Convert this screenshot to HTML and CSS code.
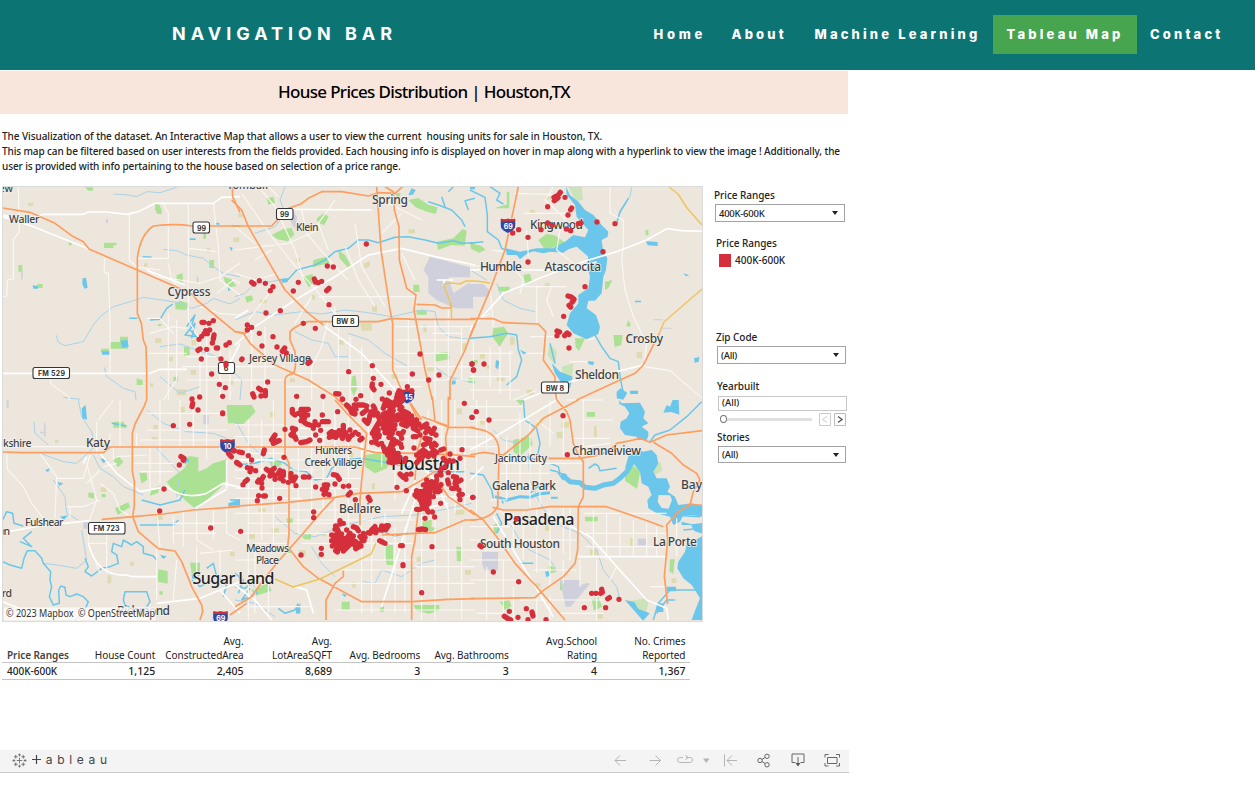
FILE: index.html
```html
<!DOCTYPE html>
<html lang="en">
<head>
<meta charset="utf-8">
<title>House Prices Distribution</title>
<link rel="stylesheet" href="styles.css">
</head>
<body>
<header class="topbar">
  <div class="brand">NAVIGATION BAR</div>
  <nav class="menu">
    <a class="link home">Home</a>
    <a class="link about">About</a>
    <a class="link ml">Machine Learning</a>
    <a class="link tab active">Tableau Map</a>
    <a class="link contact">Contact</a>
  </nav>
</header>
<main class="viz">
  <h1 class="banner"><span>House Prices Distribution | Houston,TX</span></h1>
  <div class="intro">
    <p class="l1">The Visualization of the dataset. An Interactive Map that allows a user to view the current&nbsp; housing units for sale in Houston, TX.</p>
    <p class="l2">This map can be filtered based on user interests from the fields provided. Each housing info is displayed on hover in map along with a hyperlink to view the image ! Additionally, the</p>
    <p class="l3">user is provided with info pertaining to the house based on selection of a price range.</p>
  </div>
  <div class="board">
    <svg class="map" viewBox="2 186 701 436">
      <rect class="land" x="2" y="186" width="701" height="436"/>
      <defs>
        <g id="i-shield">
          <path d="M-7 -7 Q-3.500 -5.500 0 -7 Q3.500 -5.500 7 -7 Q8.500 -2 7.500 2 Q5.500 6 0 8 Q-5.500 6 -7.500 2 Q-8.500 -2 -7 -7Z" fill="#35479c" stroke="#fff" stroke-width=".8"/>
          <path d="M-7 -7 Q-3.500 -5.500 0 -7 Q3.500 -5.500 7 -7 L7.600 -4 H-7.600Z" fill="#cf3030"/>
        </g>
      </defs>

      <!-- parks, fields and airports -->
      <g transform="translate(0 180) scale(.33333)">
        <path class="park" d="M255 22h24v10h-14zM465 72h12l8 18v12h-14l-6-14zM312 188h38v8h-10v8h-28zM205 188l10-2v10h-9zM55 255h12v20h-12zM112 312h16v12h-16zM628 240h14v24h-14zM530 285l18-5v28l-18-8zM330 486h30v-16h24v36h-54zM303 506h26v12h-26zM525 370l15-8 24 8-5 20-32-2zM670 290l25 8 14 20-20 4-14-16zM552 500h17v26h-17zM410 595l18 5v15h-18zM610 158h8v18h-8zM520 590h14v14h-14zM474 432h10v6h-10zM672 540l10 10-4 20-12-10z"/>
        <path class="field" d="M84 68h16v10h-16zM432 250h10v10h-10zM620 205h12v12h-12zM700 172h18v14h-18zM465 475h20v14h-20zM505 530h14v14h-14zM530 628h28v18h-28zM450 610h10v10h-10zM575 480h12v16h-12zM572 570h16v14h-16zM690 600h10v14h-10z"/>
        <path class="apt" d="M63 268h5v30h-5zM318 118h6v10h-6zM590 290h5v20h-5z"/>
      </g>
      <g transform="translate(235 180) scale(.33333)">
        <path class="park" d="M95 55l20-5 5 18-20 6zM110 165l35-18 25-3 8 20-20 20-30-6zM245 115l22-15 14 10-14 26-20-10zM520 60l30-6 30 20 28 8-6 20-30-8-30-12zM605 185l50-10 28-28 12 5-6 45-40-2-40 15zM310 210l20 15 18 32-10 5-25-28zM235 240l40-10 8 18-50 14zM205 290l28-8v30l-12 10zM30 350l20-4 5 14-20 8zM534 314h18l2 22h-18zM600 520l40-5 5 22-44 8zM350 590l12-4 4 40-10 22-8-20zM480 40h18l-8 20zM545 390h30v14h-30zM700 595h20v14h-20z"/>
        <path class="field" d="M10 100h14v12h-14zM385 252l20-10v16l-14 8zM182 235h14v10h-14zM520 148h20v12h-20zM412 375h14v20h-14zM230 345h10v14h-10zM75 360h20v10h-20zM375 428h35v24h-30zM565 435h10v22h-10zM470 580h18v16h-18zM575 560h22v14h-22zM165 595h15v12h-15zM680 490h14v24h-14zM310 480h16v14h-16z"/>
        <path class="apt" d="M585 230L705 262V292H640L655 340L700 310L714 314V385H660L605 360L580 340V290L565 270ZM170 90l16 20-6 38-14-24z"/>
        <path class="white" d="M605 300H655M628 300L625 318"/>
      </g>
      <g transform="translate(470 180) scale(.33333)">
        <path class="park2" d="M295 20h40l4 40-22 4zM240 490l20 25-4 40-24-30zM275 560l35-10-5 50-25-10z"/>
        <path class="park" d="M0 190l35 8 12 12-20 8-24-12zM205 180l24-18 25 4 34 24-14 8-50 10zM160 285l20-4 6 24-20 8zM85 320h34v14h-34zM405 305l22-5-12 25-10 5zM315 90l25 8 10 20-16 5zM315 475h30l-18 38-10-12zM430 465h28l-4 30-20 6zM70 445l32-5 12 20-25 40-22-30zM110 35h8v50h-45l38-12zM475 420l8 15-6 6-8-4zM527 150h8v16h-8zM5 540h18v10h-18z"/>
        <path class="field" d="M225 50h38v8h-38zM180 90h14v12h-14zM225 310h14v12h-14zM30 520h15v16h-15zM80 590h24v14h-24zM500 515h16v20h-16zM120 470h14v24h-14zM170 630h20v14h-20zM50 555h10v12h-10z"/>
        <path class="apt" d="M0 312h40l20 20-5 18h-55zM550 418h28v3h-28zM570 443h35v3h-35z"/>
      </g>
      <g transform="translate(0 400) scale(.33333)">
        <path class="park" d="M500 245L530 222L550 208L563 190L565 168L595 172V215L620 205L640 190L680 178V240L660 265L620 300L585 325L560 305L545 290L520 272ZM680 15H720V70H684ZM340 180l18-10 12 16-16 16zM418 218h22l2 22-18 10zM265 278h20l-4 18-16-4zM345 325l40-18 5 14-36 24zM475 508l28 5v38l-30-6zM570 488h30v40h-24zM450 272l30-15-6 22-24 8zM305 282h12v10h-12zM370 65l10 18h-40v-18zM478 574h10v10h-10z"/>
        <path class="field" d="M165 120h10v10h-10zM302 262h18v14h-18zM460 75h14v14h-14zM322 526h12v24h-12zM468 348h20v12h-20zM540 20h14v18h-14zM390 485h12v12h-12zM690 455h14v14h-14zM455 110h18v10h-18z"/>
        <path class="apt" d="M120 95h14v5h-14zM132 70h5v40h-5zM20 0h6v24h-6zM610 45h16v28h-16zM250 366h28v20h-28z"/>
      </g>
      <g transform="translate(235 400) scale(.33333)">
        <path class="park" d="M0 15H50L62 35L25 72H0ZM388 165L440 160L470 180L455 205L420 220L390 200ZM200 408l28-8v18h-20zM450 435h24v60h-18l-8-30zM560 365l30-6v20l-26 8zM535 615h78v16l-30 10-40-10zM50 570l50-20 10 22-50 16zM320 605h24v24h-24zM435 625l12-8v18h-12zM150 445h18v14h-18zM664 440h16v44h-14zM155 355h18v16h-18zM105 185l30-4 5 14-30 8zM575 378l30 6-20 14z"/>
        <path class="field" d="M250 460h18v14h-18zM70 325h22v10h-22zM110 385h22v16h-22zM192 450h20v20h-20zM352 545h10v18h-10zM545 470h16v16h-16zM660 330h28v14h-28zM40 400h20v18h-20zM410 250h10v18h-10zM105 35h14v16h-14zM665 25h16v18h-16zM260 395h14v14h-14zM690 510h18v14h-18zM340 160h16v12h-16z"/>
      </g>
      <g transform="translate(470 400) scale(.33333)">
        <path class="park" d="M465 215l18-24 28 22-10 54-36-25zM345 350h38v14h-38zM350 36h25v14h-25zM138 0h24l-10 16zM130 120l52-12 6 26-38 34-20-12zM235 498h12l14 16-22 8zM600 478h14l-4 44-12-8zM270 545h12v26h-12zM365 600l20-8 12 28-25 12zM90 605l28-4 6 18-20 10zM70 375l20-8-5 30-12 5z"/>
        <path class="park2" d="M545 210l25-25 8 26-24 14zM470 605l55-10 10 14-8 32-34-12z"/>
        <path class="field" d="M275 65h22v18h-22zM372 78h8v34h-8zM360 448h24v18h-24zM225 375h14v18h-14zM480 414h12v24h-12zM605 535h14v14h-14zM260 95h20v20h-20zM380 640h18v16h-18zM195 550h16v10h-16zM30 60h14v14h-14z"/>
        <path class="apt" d="M36 456h48v55h-40l-8-20zM270 540h60v16l24-8 5 5-58 68h-14zM503 416h28v20h-28z"/>
      </g>

      <!-- streams -->
      <g class="creek" transform="translate(0 180) scale(.33333)">
        <path d="M340 42L385 45L410 50L440 35L480 38L530 22M168 465L175 487L195 497L250 485L280 435L300 410L340 380L400 362L430 352L500 362L545 370L575 385L620 370L640 355L690 372L720 355M490 208L530 212L560 225L610 235L640 260L670 280L720 290M313 562L320 590L350 610L370 625L405 635L408 660M190 652L240 658M480 500L540 492L590 510L650 530L690 560M480 590L540 640L600 620"/>
      </g>
      <g class="creek" transform="translate(235 180) scale(.33333)">
        <path d="M0 350L30 340L60 310L110 305L150 295M150 20L135 60L150 100L120 140L60 160M0 420L60 395L120 405L200 395L260 402L330 390L400 398L470 410L560 390L600 395L610 440L640 470L720 480M180 455L230 480L280 490L300 530L340 530M340 460L400 480L450 520L520 560L600 560L640 590L720 610M0 580L20 600L15 660"/>
      </g>
      <g class="creek" transform="translate(470 180) scale(.33333)">
        <path d="M80 310L100 360L150 385L195 395M0 270L50 300M485 22L480 48L465 75L450 100L440 130"/>
      </g>
      <g class="creek" transform="translate(0 400) scale(.33333)">
        <path d="M235 0L245 50L275 95L285 140L230 190L190 185L120 160M102 65L105 100L145 135M280 165L300 205L340 230L370 260L430 285M130 490L170 495L230 505L260 480L245 390M440 30L490 70L560 95L640 100L680 115L700 130M470 145L540 220L530 290M160 240L195 290L200 340L235 360"/>
      </g>
      <g class="creek" transform="translate(235 400) scale(.33333)">
        <path d="M0 60L40 130L100 185L160 215M120 350L180 400L240 410L330 375L440 350L540 345L620 330L710 310M380 545L420 550L440 510L500 530L560 490L600 480M0 600L60 610L120 650M300 530L260 490L230 440"/>
      </g>
      <g class="creek" transform="translate(470 400) scale(.33333)">
        <path d="M175 160L180 240L210 310L250 370L330 400L380 450L400 510L440 560L450 600M70 90L100 120L150 130M120 370L160 440L240 480L260 510"/>
      </g>

      <!-- bayous, lakes and the bay -->
      <g transform="translate(0 180) scale(.33333)">
        <path class="water" d="M98 316l16 2v8h-14zM248 295l10-2 5 30-10 3-6-14zM362 482l20-2 4 20-20 4zM305 514h24v10h-22zM569 175h18v5h-18zM646 128h12v6h-12zM688 200l10 4-4 10zM684 322l8 8-8 3z"/>
        <path class="bayou" d="M428 230L455 232M450 420L480 418L500 385L518 372M388 415H412M560 440L585 405L570 450L590 470L555 465L585 430L575 475"/>
      </g>
      <g transform="translate(235 180) scale(.33333)">
        <path class="bayou" d="M135 300L160 298L185 270L240 255L270 240L300 215L340 205L370 180L400 180L430 188L480 172L520 170L570 180L610 190L655 182L680 190L720 188M690 140L680 120L650 90L610 75L580 65M620 50L630 80M655 20L640 35M720 55L690 62L700 90"/>
        <path class="water" d="M140 298l20-4-2 12-16 3zM650 598l12-2v16l-12 2zM520 45l10-20 12 5-8 14zM705 20h15v8h-15z"/>
      </g>
      <g transform="translate(470 180) scale(.33333)">
        <path class="bayou" d="M0 30L45 52L52 105L52 155L85 180L95 205L130 220M60 20L90 40L80 60L100 72M0 190L40 185M375 465L395 500L420 535L445 545L450 590L460 640M0 475L60 470L110 460L140 465L145 510L155 540L140 590L110 615M240 490L255 550M440 130L450 95L475 55"/>
        <path class="water" d="M288 20L300 45L325 65L345 90L370 105L395 135L415 155L413 170L395 180L400 215L412 235L408 270L400 290L395 340L375 362L355 362L350 385L378 405L390 440L385 462L350 478L310 460L290 435L300 400L325 370L325 345L355 325L360 290L350 250L355 230L320 200L295 208L280 218L240 215L220 220L190 214L170 222L150 238L140 225L110 225L108 205L150 215L200 205L250 205L285 185L310 165L345 172L355 150L320 110L315 75L290 45Z"/>
        <path class="water" d="M245 550L270 575L308 590L300 625L275 610L255 580ZM355 543l18 3-4 10-14-4zM528 184l35 2v12l-30-2zM672 535l16-4-2 14-12 3zM640 280l18 6-10 3zM495 362h18v5h-18zM440 635l12-10 20 14-12 20-20-4zM480 632h24v10h-24zM78 540l10 4-4 25-8-8zM150 510l20 8-10 5z"/>
      </g>
      <g transform="translate(0 400) scale(.33333)">
        <path class="bayou" d="M8 485L30 495L65 505L72 475L82 452L105 452L125 475L130 490L152 515L150 540L155 560L148 590L160 615L178 610L176 570L182 558L195 562L198 585L210 590L230 582L250 590L265 605L250 640L225 660M8 360L20 335L38 340L42 370L70 378M60 425L95 440L70 415L95 395M255 475L265 500L255 515L275 528L305 505L330 500L355 490L350 465L335 455L340 430L365 440L370 420L395 435L410 425L430 440L430 460L460 468L470 480M370 600L375 575L440 575L450 605L440 620M370 600L375 615L395 625M335 70L380 78M420 375H520L535 360M425 300L480 315L540 300L555 270M690 300L720 300M690 312L720 312M620 505L640 490L650 530L680 555L670 590M575 540L600 560L640 540"/>
        <path class="water" d="M245 25l12-10 4 44-14-4zM135 210l15-5-6 12zM172 246l18 4-12 8zM300 175l25 6-15 8zM685 310l35-12v16l-35 4zM180 350l24-4-12 14zM480 465l20 4-10 8zM575 525l22 5v10l-20-4zM560 170l8 12-14 12z"/>
      </g>
      <g transform="translate(235 400) scale(.33333)">
        <path class="bayou" d="M0 195L60 190L110 175L150 190L175 210L215 215L240 240L275 235L290 205L325 180L380 175L440 185L490 195L540 205L600 215L690 215M0 560L30 565L55 545L65 580L20 600L45 565M0 520L25 540L10 580M130 625L150 640L180 630L190 610M440 395L480 408L520 400"/>
        <path class="water" d="M0 305l15-5v12h-15zM182 625l14-15v30l-12 2zM320 580l16 5-8 6z"/>
      </g>
      <g transform="translate(470 400) scale(.33333)">
        <path class="bayou" d="M160 0L165 60L200 85L210 130L200 180L170 170M0 220L40 225L65 270L70 295M355 205L375 192L385 198L390 212L440 205M240 190L265 200L270 220L290 225M240 210L262 215L280 240M80 340L95 370L80 400M90 290L100 310M240 250L200 262L180 280M695 5L650 50L600 90L555 105L540 125M550 660L565 610L600 570L680 570M600 345L690 350M695 385L640 390M150 490L190 490M560 640L590 600L615 600"/>
        <path class="bay" d="M280 228L300 245L330 248L345 262L375 265L400 255L430 250L450 235L470 215L490 180"/>
        <path class="strait" d="M75 290L110 300L150 290L180 292L205 282L240 278"/>
        <path class="water" d="M448 0L455 10L510 8L525 35L520 55L535 70L515 80L535 95V108L530 120H505L500 110L465 105L450 85L452 65L470 55L478 40L465 20L448 12ZM478 160L495 145L520 155L545 150L560 165L565 190L550 215L560 235L590 235L600 260L592 275L615 290L625 315L665 310L697 318V350L665 345L640 345L630 365L610 375L600 350L560 340L535 325L532 300L545 285L535 260L515 250L510 215L490 190L465 205ZM697 408L650 435L645 455L625 485L622 505L640 535L665 555L675 570L690 595L672 640L665 660H697ZM590 15l10 5 8-20h18l2 44-24-8-24 2zM635 365l30 8 32-4v32l-24-8-10-18-28 0zM465 600l28 6 12 20 34 14-20 22-30-34zM590 560h28v14h-28zM560 610h20v26h-20zM225 515l10-2 6 14-12 4zM243 290h20v6h-20z"/>
        <path class="landfill" d="M566 285L600 286L606 300L596 326L575 324L563 305Z"/>
      </g>

      <!-- local streets -->
      <g class="street" transform="translate(0 180) scale(.33333)">
        <path d="M55 20L58 155L40 180V297L22 300L20 348L8 350M388 100V240L412 262M313 232V278L325 280L330 420V580M152 580V610L208 652V660M412 235H505V100L487 66M505 250L515 300L565 350M565 70V420L600 480V660M640 70L655 200L660 300L720 345M440 270L470 290L540 300L600 310L660 290L720 250M450 460L520 440L560 445M505 400V660M530 420V600L490 660M440 520H560M545 560H720M620 470V660M660 500V660M560 600H720M690 510V660M560 530H650M600 380L660 400L720 405M440 415H480L520 460M412 262L480 270M565 205L650 215M650 340L700 300L720 310"/>
      </g>
      <g class="street" transform="translate(235 180) scale(.33333)">
        <path d="M20 40L110 170L190 270L260 350L330 440M0 210L80 200L160 190L250 150M200 90L215 160L300 260L340 300M70 20L120 80L180 210L205 300M300 60L250 130L280 210M330 200L370 300L420 380M360 130L380 260L450 380M250 350H550M300 380V440M60 240L110 210M0 280L60 300L130 280M110 330L40 420M230 350L180 430M280 420L260 500L230 560V660M310 440V660M345 470V660M380 500V660M410 540V660M180 540H480M180 580H520M150 620H560M90 440V620M50 440V660M0 560H150M0 600H150M480 440H720M480 480H720M480 520H640M500 220L540 300M520 420V660M600 420V660M640 380V600M680 440V600M590 460H680M480 560H720M480 600H720M100 20L130 50M440 60L560 120M500 100L440 160M0 140L60 190"/>
      </g>
      <g class="street" transform="translate(470 180) scale(.33333)">
        <path d="M135 40L290 45M160 100H300M250 20L225 60L290 120M65 210L100 215M170 150L175 230M270 150L260 210L310 250M0 258H60M130 260L160 300L150 340M200 315V430M245 320L230 360L250 410M160 320H290M0 440L60 400M60 320L70 440M420 20V100L460 120V200L455 240L465 330L490 410L515 460L530 490L522 560L600 572L697 655M0 520H130M10 480V660M60 500V620M90 500V640M120 510V660M0 590H120M0 630H150M180 470H250M170 520H220M265 660V640M300 545H350M350 480L375 475M130 660L200 630"/>
      </g>
      <g class="street" transform="translate(0 400) scale(.33333)">
        <path d="M8 140H310M20 160L22 208L70 260L95 310L130 355M120 160L170 230L165 355M170 235H250L270 165M290 65V165M260 190L290 300L265 370V430L300 520M330 100V140M300 250L340 280L360 330L385 345M310 200L350 190M200 320H250L300 300M300 210L260 250M320 385V520M295 60L340 0M360 0V140M480 0V140M540 0V140M580 0V140M620 0V180M440 40H680M440 90H680M420 120H660M450 140V280M480 140V250M340 140V180M400 190H520M420 215H520M350 170L440 165M480 150V250M470 330L480 440M520 350V430M550 330V440M590 325V420L640 450M520 370H680M520 400H650M640 330V420M680 320V400L720 420M470 440V600M520 600L530 480M590 440V560M660 450V520M600 460L700 450M410 100V140M210 320V355M265 430H320"/>
      </g>
      <g class="street" transform="translate(235 400) scale(.33333)">
        <path d="M40 60V660M80 60V420M115 0V430M190 0V400M230 20V360M265 0V340M300 40V400M340 0V390M0 110H380M0 75H150M150 85H380M0 160H150M0 180H380M0 210H240M0 235H380M0 265H370M0 295H200M0 340H160M40 370H300M0 400H160M60 430H160M160 330H540M180 360H540M190 400H420M200 430H540M380 300V640M410 350V640M450 340V480M480 380V640M510 380V640M560 320V660M600 340V660M640 330V600M680 380V660M250 480H540M320 510H540M300 550H540M540 450H720M540 500H720M540 550H720M300 630H720M400 110H720M400 0V160M440 50V200M480 130V300M540 100V300M400 150H540M580 30V230M620 0V200M660 0V340M690 80V320M560 80H720M560 110H720M560 140H720M540 290H720M640 240L720 300M60 440V640M100 520V640M0 480H120M0 620H230"/>
      </g>
      <g class="street" transform="translate(470 400) scale(.33333)">
        <path d="M0 20H160M0 60H180M0 110H90M0 140H90M20 0V340M50 0V150M110 110V300M150 40V260M180 70V320M210 160V320M240 0V140M100 190H340M90 220H240M280 60V170M200 60L250 100M340 0V160M290 0H400M340 60H430M310 115H420M345 140L420 130M90 330L130 380M0 380H120M0 420H320M130 340V440M160 330V480M200 320V520M240 330V560M280 320V460M300 320V480M60 300H110M340 340H590M345 400H590M345 440H590M370 330V470M410 340V480M450 350V470M490 360V470M530 370V470M560 380V470M0 480H130M0 540H160M50 500V660M100 480V660M130 560V660M200 600V660M240 590V660M280 480V550M190 510H320M150 600H400M270 640H400M330 480V560M440 500L420 540M380 480V660M0 450H120M20 640H100M620 355V470M600 420H640M590 560H540"/>
      </g>
      <!-- arterials -->
      <g class="road" transform="translate(0 180) scale(.33333)">
        <path d="M8 110L100 140L267 207M8 106L100 118L130 103H250L265 96H320L380 103L415 95L465 70H640L665 52L720 50M8 580H450L480 568H560"/>
        <path d="M440 270L555 315M720 490L690 550"/>
      </g>
      <g class="road" transform="translate(235 180) scale(.33333)">
        <path d="M0 495L60 440L180 360L300 290L400 225L500 205L600 230L720 255M170 88L410 90M270 440L380 520L490 640M0 415L40 390"/>
      </g>
      <g class="road" transform="translate(470 180) scale(.33333)">
        <path d="M697 154L635 152L590 146L530 180L440 215L340 245L220 290L100 340L0 450M0 270H320L380 245M160 660L300 605L440 575L520 555M0 270L60 268"/>
      </g>
      <g class="road" transform="translate(0 400) scale(.33333)">
        <path d="M8 398L120 378L270 362M300 160L350 220L420 275L500 260Q550 300 620 280L670 250L720 262M265 430Q290 530 380 525L395 530H470M8 605L110 645M470 610L600 595L720 545M250 190L260 170M585 325L680 268M680 180V265M660 570L720 640"/>
      </g>
      <g class="road" transform="translate(235 400) scale(.33333)">
        <path d="M0 180H120M500 340L540 250L620 200M440 620L540 300M540 330L640 310M560 200L600 240L640 330M0 555L60 600L110 660M180 560L215 570L235 640M380 130V200"/>
      </g>
      <g class="road" transform="translate(470 400) scale(.33333)">
        <path d="M0 150L100 95L260 0M70 350L250 650M320 470H590M230 340L360 410L440 500L530 600L590 625L595 660M0 240L40 200"/>
      </g>

      <!-- highways -->
      <g class="hwy" transform="translate(0 180) scale(.33333)">
        <path d="M8 84L90 97L165 130L215 167L250 185L267 207L412 270L545 328L580 345L590 360L705 455L740 460M440 660V570L438 500L430 480L424 430L412 400V235Q420 165 460 138Q530 130 575 138H720M697 20L698 50L720 97"/>
      </g>
      <g class="hwy" transform="translate(235 180) scale(.33333)">
        <path d="M-10 138H110L160 85L198 72L220 55L260 35L320 35L400 48L430 38L480 40L503 20M-10 60L20 90L40 140L150 330L220 400L265 435M425 20L438 210L465 390L473 430V570L500 630L560 720M450 20L475 35L478 90L492 140L493 240L515 325L543 345L537 390L570 570L592 660M0 455L25 460L45 490L120 555L165 575L220 600L300 650L350 700M150 660L150 600Q150 585 175 580Q185 565 180 515L165 480V455Q185 435 220 425H430L470 415L540 418H720M545 373L600 375L620 384H648V370M720 430L690 510L645 602V660"/>
      </g>
      <g class="hwy" transform="translate(470 180) scale(.33333)">
        <path d="M145 20L105 210L60 330L0 470M0 416H70L100 428L205 432L227 455L220 540L255 590V625L260 660M320 660L450 600L495 580L520 555L567 462"/>
      </g>
      <g class="hwy" transform="translate(0 400) scale(.33333)">
        <path d="M440 0L432 20L405 72L397 100V215L403 245V315L398 350L415 395L475 446L525 453L545 485L575 560L605 615L608 635L600 660M8 156L70 158H310L330 141H720M305 358L400 350L490 342L580 330L720 320M690 645L740 610"/>
      </g>
      <g class="hwy" transform="translate(235 400) scale(.33333)">
        <path d="M-20 141H360L420 158L540 160L640 163L720 170M150 0V165L162 190V400L158 440L205 500L250 535L380 605H530L640 598L720 596M-20 320L150 308L300 292L370 280L500 275L560 240L620 200M300 292L260 335L200 405L135 478L85 540L50 590L0 620M300 0L340 45L395 100L380 240L375 300V375M440 405L540 400L600 398L690 360H720M273 660V600L300 550L325 530V512M550 330L540 420L530 470V660M525 10L550 60L560 110L545 160L540 240M592 -10L598 45L600 65M600 65L640 82H720M640 -10V80L632 110L635 180M560 50L640 78M600 230L640 290L720 345"/>
      </g>
      <g class="hwy" transform="translate(470 400) scale(.33333)">
        <path d="M0 82L45 92Q90 110 87 165L83 320Q60 360 0 360M0 330L40 360L80 410L135 490L200 560L285 660M0 165L40 157L100 165L175 105L220 55L325 0M260 0L290 35L300 60L310 130L325 165L340 185V290L325 320L323 450L315 490L280 530L215 575L195 593L0 596M235 175H330L390 165L420 150L440 130L490 120L510 115L540 127L590 105L697 92M550 127L605 160L640 195L680 220L690 240L670 275L660 315L625 335L590 375L593 420L583 530L593 612M68 322L100 330L170 330L240 320H410L540 365L580 380M650 315H697"/>
      </g>
      <g class="gold">
        <path d="M443.500 284L452 283L460 284L466 281H476L490 283M443.500 284L451.500 306V318M669 187L678 194L687 208L702 225M702 289L672 315L664 322L659 334M275 579L293 587L320 579L371 554L376 543M535 427L541 420"/>
      </g>

      <!-- route markers -->
      <g class="plate">
        <rect x="193" y="222" width="16.500" height="11" rx="2"/><rect x="276.500" y="208.500" width="16.500" height="11" rx="2"/>
        <rect x="332.500" y="315.500" width="26" height="11" rx="2"/><rect x="541.500" y="382" width="27" height="11" rx="2"/>
        <rect x="33" y="367.500" width="36.500" height="11" rx="2"/><rect x="88.500" y="522.500" width="36.500" height="11.500" rx="2"/>
        <rect x="218.500" y="362.500" width="16" height="11" rx="2"/>
      </g>
      <g class="plate-text">
        <text x="197" y="230.500" textLength="9">99</text><text x="280" y="217" textLength="9">99</text>
        <text x="336.500" y="324" textLength="18">BW 8</text><text x="546" y="390.500" textLength="18">BW 8</text>
        <text x="38" y="376" textLength="27">FM 529</text><text x="93.500" y="531.200" textLength="26">FM 723</text>
        <text x="223.800" y="370.800">6</text>
      </g>
      <use href="#i-shield" x="508" y="225.500"/><use href="#i-shield" x="227.500" y="446"/><use href="#i-shield" x="220.500" y="618"/><use href="#i-shield" x="407" y="396"/>
      <g class="shield-text">
        <text x="503.700" y="228.500">69</text><text x="223.700" y="449">10</text><text x="216.200" y="620.500">69</text><text x="403.500" y="399.500">45</text>
      </g>

      <!-- place names -->
      <g class="place">
        <text x="-4" y="192" textLength="17">iew</text><text x="9" y="223" textLength="30.500">Waller</text>
        <text x="227" y="189" textLength="41">Tomball</text><text x="296" y="231" textLength="22.500">Klein</text>
        <text x="249" y="362" textLength="62">Jersey Village</text><text x="-3" y="447" textLength="34.500">okshire</text>
        <text x="25" y="526" textLength="38.500">Fulshear</text><text x="-4" y="535" textLength="14">ton</text><text x="-4" y="597" textLength="16">ard</text>
        <text x="315" y="454" textLength="37">Hunters</text><text x="304.500" y="465.500" textLength="58">Creek Village</text>
        <text x="246" y="552" textLength="43">Meadows</text><text x="256" y="563.500" textLength="23">Place</text>
        <text x="495" y="462" textLength="52">Jacinto City</text>
      </g>
      <g class="place mid">
        <text x="372" y="204" textLength="36">Spring</text><text x="167.500" y="296" textLength="43">Cypress</text>
        <text x="480" y="271" textLength="42">Humble</text><text x="544.500" y="271" textLength="56.500">Atascocita</text>
        <text x="530" y="229" textLength="53">Kingwood</text><text x="625.500" y="343" textLength="37.500">Crosby</text>
        <text x="575" y="379" textLength="44">Sheldon</text><text x="86" y="447" textLength="24">Katy</text>
        <text x="339" y="513" textLength="42">Bellaire</text><text x="117" y="615" textLength="53">Richmond</text>
        <text x="492" y="490" textLength="64">Galena Park</text><text x="572" y="455" textLength="69">Channelview</text>
        <text x="681" y="488.500">Bay</text><text x="653" y="546" textLength="44">La Porte</text>
        <text x="480" y="548" textLength="80">South Houston</text>
      </g>
      <g class="place big">
        <text x="192.500" y="584" textLength="82">Sugar Land</text><text class="metro" x="391" y="470" textLength="69">Houston</text>
        <text x="503.500" y="525" textLength="71">Pasadena</text>
      </g>

      <!-- houses for sale -->
      <g class="dots" transform="translate(0 180) scale(.33333)">
        <path d="M606 427h6M627 430h0M640 422h0M617 452h0M629 450h0M622 461h-10M605 469h0M597 478h0M642 465l-2 12M637 489h0M600 507l-6 4M620 508h0M649 504h4M678 495h0M688 488h0M604 537h0M663 537h0M678 550v4M635 582h0M658 613h0M676 623h0M668 649h0M599 651h0M576 657h0"/>
      </g>
      <g class="dots" transform="translate(235 180) scale(.33333)">
        <path d="M394 192h0M277 258h0M295 261h0M190 307h0M175 333h0M50 307l7 5M73 302h0M91 310h0M114 320h0M106 332h0M238 297l3 9M250 308h0M260 304h0M282 325l-7 7M282 374h0M136 392h0M93 399h0M37 435h0M50 442h0M37 450h0M73 460h0M205 430h0M241 445h0M114 470h0M81 498h0M126 501h0M149 504l-7 10M154 519h0M21 537l-1 2M225 545l-6 5M98 606h0M71 625l7 5M91 632v15M53 641l4 10M78 648h0M185 649h0M264 649h0M302 641l10 1M322 657h0M341 575h0M412 557h0M415 595h0M412 612l-1 8l6 9M438 613h0M463 639h0M377 647h0M363 658h0M442 657h0M492 632l-5 13l13-4l-15 12l20 2M517 620h0M532 582h0M530 632h0M555 522h0M581 600h0M612 585h0M711 552h0M715 570h0"/>
      </g>
      <g class="dots" transform="translate(470 180) scale(.33333)">
        <path d="M271 37l-6 8l-13 7l6 4l-5 6l11-9M285 52h0M233 80h0M305 84l-3 5M294 105h0M233 129h0M246 136h0M213 149h0M146 149h0M128 159h0M174 172h0M289 147h0M302 152h0M325 131l8-2M381 126h0M435 131h0M399 215h0M174 246h0M345 320h0M294 348l10 3l8 7l-5 8M297 376l5 5M281 409h0M261 453l8 3M261 467h0M284 467l8-8l5 4M297 504h0M42 552h0M6 552h0M11 570h0"/>
      </g>
      <g class="dots" transform="translate(0 400) scale(.33333)">
        <path d="M578 10l-2 10M594 30h0M668 39v2M569 73h0M520 77h0M543 170l9 5l-2 6M538 195h0M492 267h0M479 333h0M632 384h0M686 161l8 9M701 153h0M711 188h0"/>
      </g>
      <g class="dots" transform="translate(235 400) scale(.33333)">
        <path d="M172 28v10l8 7M190 40h0M198 28h22M208 38l-8 10l8 7l-3 10l10 7l10 3M218 45h0M198 62h0M262 45h0M240 65h0M250 75h0M262 65h18M235 85h0M237 76h0M257 91h0M172 85l10 3M175 98l-7 7l12 5l3 8M150 88h0M197 128l18-3l10-5M242 105h0M254 121h0M120 105l-10 15l8 5l15-3l-18 8M88 150l-3 11M147 172h0M12 156l10 2M-2 152h0M5 187l10 8M40 167h0M50 180h0M37 203h0M48 205l-3 10M62 212h0M37 239l-7 6M24 254h0M72 240l-4 6l12-8l5-8M80 250h0M81 264h0M94 208l11 7l13-10M112 222l8 6M105 228h0M130 220l5-8M145 215v12l-10 8M120 238h0M145 243h0M160 247h0M168 220v13M182 231l-7 12M183 257h0M205 231h5M222 231h0M242 261h0M71 287h0M67 302h0M91 288h-5M134 295h0M268 255h10M262 268l10 4l-5 11M282 284h0M275 265h0M295 224l10 2l8 12M300 252h0M325 259h0M341 258h0M346 278l-6 7M361 299h0M400 292l5 9M236 336h0M236 353h0M17 394h0"/>
        <path d="M283 100l7-5l5 13l-12 4M300 98l2 14M312 92l-2 13M325 76v12M320 102l2 13M332 98l3 10M345 90h0M340 118l5-8M352 105h0M361 97h0M370 103h0M381 115l-6 5M308 35h0M323 -2h0M335 15l10 10l5 13l10 4M363 28l-5-13h27l10 3M382 40l13-10M388 60l10 10l4-10l3-15l5-10M415 18l5 10M418 45l10-5l4 14M445 25l5-15l10 8l-5-18l13 8l7 12l-10 10M480 5l10 10l10 7M488 -4l12 8M428 75l5-10l-18 30l15-5l-12 20l15-5l-15 20l12 8M412 100h0M410 127h0M440 130h0M432 110h0"/>
        <path class="mass" d="M445 42L475 32L442 52L482 48L448 62L488 60L440 72L480 75L445 85L478 88L450 98L472 100L462 112M490 45L512 42L495 57L530 48L508 62L545 60L525 72L552 72L535 85L548 92M500 72L515 78M495 28L520 40M475 118L468 135L480 130L452 155L475 150L458 165L490 160L465 175L495 172L470 188L490 185M445 140L450 155"/>
        <path d="M490 100h0M505 95l-8 10M500 115h0M485 125l12 8M500 142h0M535 110h8M555 105h0M560 82l15-10M575 85h5M572 98l8-8M590 100l8-15M603 105h0M570 115l15 3M537 144h0M565 135l18-8M555 158l10-8l12 10l-15 10l-10 10l-7 8M560 175h0M545 165h0M580 170l10-12M598 130l5 5M595 150l10 8M618 150l8-3M597 168h0M590 140h0M645 162h0M681 149h0M675 175h0M625 175l10 12l8-5M655 183h0M630 200h0M620 205l-5 12M640 218h0M462 186h0M508 185h0M512 175h0M495 222l10 10l10-8M528 222h0M513 238h0M486 262h0M514 272h0M688 10h0M711 52h0"/>
        <path class="mass" d="M545 290L560 280L575 265L600 262L565 255L585 250L575 285L555 300L585 275L545 275M555 290L585 285L570 305M560 310L565 325L575 318M600 255L605 240"/>
        <path d="M540 285h0M545 272h0M575 240h0M590 245h0M605 228h0M618 225h0M610 262l8-8M615 272h0M600 275h10M595 290h0M582 300v10M545 328h10M575 328l5 8M592 336h0M617 310h0M570 355h0M599 351h0M550 389l12-2l10 2M638 240l3 12M655 230l10 2l-5 18l18-10M668 245h0M650 265l8 0M665 260h0M672 270h0M672 285l10-2M675 299h0M713 292h0"/>
        <path class="mass" d="M302 378L308 390L312 400L295 408L320 402L298 418L325 415L300 430L340 412L305 440L345 422L315 445L348 430L330 448"/>
        <path d="M315 362v10M325 370h0M300 388h0M290 405h0M290 422h0M292 438h0M302 452l5 4M335 390h0M345 400l-5 8M355 380l10 4l5 8M355 408h0M350 420l12 5l-6 8M375 410l12 12M375 430l-3 10l-10 6M385 400h0M390 412l-5-8M400 398h0M410 390l10-10l-2 15M405 400h0M430 390h0M440 378l10 2l-10 10M455 377l5 0l-8 12M422 398h0M378 438h0M325 453h0M434 422l8 4M450 430h0M497 437h5M591 440h0M504 494v3M560 578h0M259 445h0M259 463h0M198 465h0"/>
      </g>
      <g class="dots" transform="translate(470 400) scale(.33333)">
        <path d="M19 35h0M6 52h0M57 60h0M279 47h0M292 164h0M9 292h0M139 356h0M30 437l4 3M70 516h0M146 545h0M343 623h0M407 623h0M365 580h0M378 580h0M395 568l2 9l-5 3M418 593l-5 3M447 598h0M118 634h0M169 626h0M186 636l3 12M144 652h0M103 649l9 6l10 5M174 659h0M228 659h0"/>
      </g>
      <rect x="4" y="607.500" width="151.500" height="13" fill="#fff" opacity=".78"/>
      <g class="credit"><text x="6" y="617.300" textLength="67.500" lengthAdjust="spacingAndGlyphs">© 2023 Mapbox</text><text x="78" y="617.300" textLength="77" lengthAdjust="spacingAndGlyphs">© OpenStreetMap</text></g>
      <rect class="frame" x="2.500" y="186.500" width="700" height="435"/>
    </svg>

    <aside class="filters">
      <section class="f1"><h2>Price Ranges</h2><div class="select"><span>400K-600K</span><i class="caret"></i></div></section>
      <section class="f2"><h2>Price Ranges</h2><div class="legend"><i class="swatch"></i><span>400K-600K</span></div></section>
      <section class="f3"><h2>Zip Code</h2><div class="select"><span>(All)</span><i class="caret"></i></div></section>
      <section class="f4"><h2>Yearbuilt</h2><div class="range">(All)</div>
        <div class="slider"><i class="knob"></i><i class="track"></i>
          <svg class="step off" viewBox="0 0 12 13"><path d="M.5 .5h11v12H.5zM8 3.500L3.500 6.500L8 9.500"/></svg>
          <svg class="step" viewBox="0 0 12 13"><path d="M.5 .5h11v12H.5z"/><path class="arrow" d="M4 3.500L8 6.500L4 9.500"/></svg>
        </div>
      </section>
      <section class="f5"><h2>Stories</h2><div class="select"><span>(All)</span><i class="caret"></i></div></section>
    </aside>
  </div>

  <div class="table">
    <div class="row head"><b>Price Ranges</b><span>House Count</span><span>Avg.<br>ConstructedArea</span><span>Avg.<br>LotAreaSQFT</span><span>Avg. Bedrooms</span><span>Avg. Bathrooms</span><span>Avg.School<br>Rating</span><span>No. Crimes<br>Reported</span></div>
    <div class="row data"><em>400K-600K</em><span>1,125</span><span>2,405</span><span>8,689</span><span>3</span><span>3</span><span>4</span><span>1,367</span></div>
  </div>

  <footer class="toolbar">
    <svg class="mark" viewBox="0 0 16 16"><path d="M8 5v6M5 8h6M4 2v4M2 4h4M12 2v4M10 4h4M4 10v4M2 12h4M12 10v4M10 12h4M8 .5v3M6.500 2h3M8 12.500v3M6.500 14h3M2 6.500v3M.5 8h3M14 6.500v3M12.500 8h3"/></svg>
    <div class="wordmark"><svg viewBox="0 0 9 9"><path d="M4.500 0v9M0 4.500h9"/></svg><span>a</span><span>b</span><span class="ell">l</span><span>e</span><span>a</span><span>u</span></div>
    <svg class="tools" viewBox="610 750 239 22">
      <g class="dim"><path d="M626 760.500H615M620 755.500L615 760.500L620 765.500M649.500 760.500H660.500M655.500 755.500L660.500 760.500L655.500 765.500M683 757.500H680.500Q677.500 757.500 677.500 760Q677.500 762.500 680.500 762.500H689.500Q692.500 762.500 692.500 760Q692.500 757.500 690 757.500H686M685.500 755L688 757.500L685.500 760M724.500 754.500V766.500M737 760.500H727M732 755.500L727 760.500L732 765.500"/><path class="solid" d="M703 758.500H709.500L706.250 763Z"/></g>
      <g class="dark"><circle cx="760" cy="760.500" r="2.200"/><circle cx="767" cy="756.300" r="2.200"/><circle cx="767" cy="764.800" r="2.200"/><path d="M762 759.500L765 757.500M762 761.500L765 763.500M795.500 762.500H792V754H804V762.500H800.500M798 757V765M825 757.500V754.500H828.500M836 754.500H839.500V757.500M839.500 763V766H836M828.500 766H825V763M827.500 757.500H837V763.500H827.500Z"/><path class="solid" d="M795.500 763H800.500L798 766.500Z"/></g>
    </svg>
  </footer>
</main>
</body>
</html>
```
FILE: styles.css
```css
* { box-sizing: border-box; }
body { margin: 0; background: #fff; color: #222; font-family: "Noto Sans", "Open Sans", sans-serif; }
h1, h2, p { margin: 0; font-weight: 500; }

.topbar { height: 70px; background: #0d7474; color: #fff; display: flex; justify-content: space-between; font-family: "Inter", sans-serif; }
.brand { padding: 22px 0 0 172px; font-size: 18px; line-height: 24px; font-weight: 700; letter-spacing: 5px; white-space: nowrap; }
.menu { display: flex; padding: 15px 19px 0 0; }
.link { height: 39px; padding-left: 13.5px; line-height: 39px; font-size: 13px; font-weight: 800; letter-spacing: 3.15px; white-space: nowrap; }
.home { width: 78px; letter-spacing: 3.7px; }
.about { width: 83px; }
.ml { width: 192px; }
.tab { width: 144px; }
.contact { width: 99px; padding-left: 13px; }
.active { background: #46a54e; }

.viz { width: 849px; }
.banner { margin-top: 1px; width: 848px; height: 43px; background: #f8e6dc; color: #000; text-align: center; font-size: 17px; line-height: 42px; letter-spacing: -.66px; }
.intro { padding: 15px 0 0 2px; height: 72px; font-size: 10px; line-height: 15px; white-space: nowrap; letter-spacing: -.11px; }
.l1 { letter-spacing: -.07px; }

.board { display: flex; padding-left: 2px; }
.map { width: 701px; height: 436px; flex: none; display: block; }
.land, .landfill { fill: #ece6dc; }
.frame { fill: none; stroke: #d9dcda; }
.park { fill: #aae192; }
.park2 { fill: #cbe3b9; }
.field { fill: #dedab2; }
.apt { fill: #cfd0dc; }
.water { fill: #6bc6eb; }
.bayou, .bay, .strait, .creek, .street, .road, .hwy, .gold, .white { fill: none; stroke-linejoin: round; }
.bayou { stroke: #6bc6eb; stroke-width: 4.5; }
.bay { stroke: #6bc6eb; stroke-width: 15; stroke-linecap: round; }
.strait { stroke: #6bc6eb; stroke-width: 9; }
.creek { stroke: #a9d2e9; stroke-width: 3; }
.street { stroke: #fbf8f4; stroke-width: 3.4; }
.road, .white { stroke: #fff; stroke-width: 5; }
.hwy { stroke: #ff9d5e; stroke-width: 5; }
.gold { stroke: #efc45d; stroke-width: 1.5; }
.plate { fill: #fff; stroke: #34373a; stroke-width: 1.1; }
.plate-text { font: 700 7px "Inter", sans-serif; fill: #333; }
.shield-text { font: 700 7px "Inter", sans-serif; fill: #fff; }
.place { font-size: 10.5px; fill: #3e4347; stroke: #f4f0e9; stroke-width: 1.4px; paint-order: stroke; font-weight: 500; }
.mid { font-size: 12px; }
.big { font-size: 16px; font-weight: 500; fill: #202326; }
.metro { font-size: 17.5px; }
.dots { fill: none; stroke: #d62f3c; stroke-width: 16; stroke-linecap: round; stroke-linejoin: round; }
.mass { stroke-width: 16; }
.credit { font-size: 10px; fill: #333; }

.filters { flex: 1; padding: 2px 0 0 11px; }
h2 { font-size: 10px; line-height: 14px; letter-spacing: -.05px; }
.f1 { height: 48px; }
.f2 { height: 94px; padding-left: 2px; }
.f3 { height: 49px; padding-left: 2px; }
.f4 { height: 51px; padding-left: 3px; }
.f5 { padding-left: 3px; }
.select { margin: 2px 0 0 1px; width: 130px; height: 18px; border: 1px solid #a3a3a3; display: flex; align-items: center; justify-content: space-between; padding: 0 6px 0 3px; font-size: 9.5px; font-weight: 500; letter-spacing: -.25px; }
.f3 .select { width: 129px; }
.f5 .select { width: 128px; height: 17px; }
.caret { border: 3px solid transparent; border-top: 4px solid #222; border-bottom: 0; }
.legend { display: flex; align-items: center; gap: 4px; padding: 3px 0 0 3px; font-size: 10px; line-height: 14px; font-weight: 500; }
.swatch { width: 12px; height: 13px; background: #d62f3c; }
.range { margin: 3px 0 0 1px; width: 129px; height: 15px; border: 1px solid #c8c8c8; padding-left: 3px; font-size: 9.5px; line-height: 12px; font-weight: 500; }
.slider { display: flex; align-items: center; height: 16px; padding-left: 3px; }
.knob { width: 7px; height: 8px; border: 1px solid #777; border-radius: 50%; }
.track { width: 85px; height: 3px; background: #e0e0e0; margin-right: 7px; }
.step { width: 12px; height: 13px; fill: none; stroke: #bbb; margin-right: 3px; }
.off { stroke: #ccc; }
.arrow { stroke: #555; stroke-width: 1.4; }

.table { margin: 12px 0 0 2px; width: 688px; height: 46px; }
.row { display: grid; grid-template-columns: 69.4px repeat(7, 88.37px); align-items: end; text-align: right; border-bottom: 1px solid #c4c4c4; }
.row > :first-child { text-align: left; padding-left: 5px; white-space: nowrap; font-style: normal; }
.row > span { padding-right: 4.5px; white-space: nowrap; }
.head { height: 29px; font-size: 10px; line-height: 14px; letter-spacing: -.05px; }
.data { height: 17px; font-size: 10.5px; line-height: 16px; font-weight: 500; }
.data em { font-size: 10px; }
.head b { font-weight: 600; color: #444; }

.toolbar { margin-top: 70px; height: 23px; background: #f4f4f4; border-bottom: 1px solid #c9c9c9; display: flex; align-items: center; }
.mark { width: 15px; height: 15px; margin: -2px 0 0 12px; fill: none; stroke: #666; stroke-width: .9; }
.wordmark { display: flex; align-items: center; width: 75px; margin: -3px 0 0 5px; justify-content: space-between; font-family: "Inter", sans-serif; font-size: 12px; line-height: 16px; color: #444; }
.wordmark svg { width: 9px; height: 9px; fill: none; stroke: #444; stroke-width: 1.2; }
.tools { width: 239px; height: 22px; margin-left: auto; fill: none; }
.dim { stroke: #b5b5b5; }
.dim .solid { fill: #b5b5b5; stroke: none; }
.dark { stroke: #666; }
.dark .solid { fill: #555; stroke: none; }
```
